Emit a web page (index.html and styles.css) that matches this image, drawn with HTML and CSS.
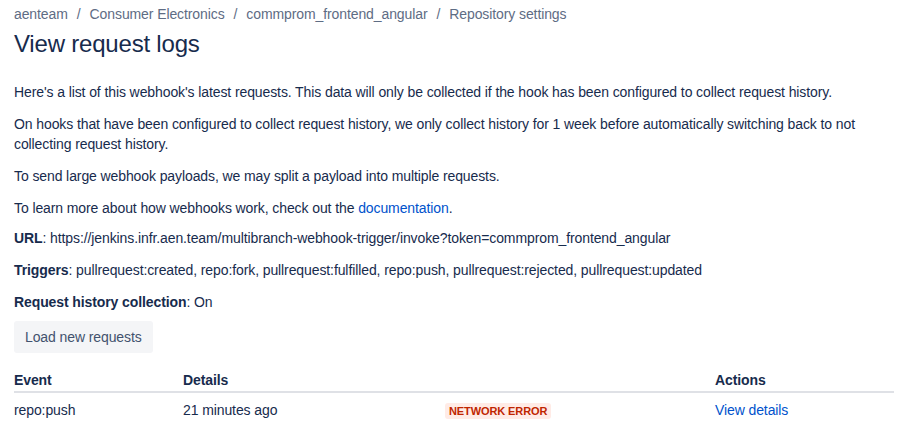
FILE: index.html
```html
<!DOCTYPE html>
<html lang="en">
<head>
<meta charset="utf-8">
<title>View request logs</title>
<link rel="stylesheet" href="styles.css">
</head>
<body>
<div class="page">
  <nav class="breadcrumbs">
    <a href="#">aenteam</a><span class="sep">/</span><a href="#">Consumer Electronics</a><span class="sep">/</span><a href="#">commprom_frontend_angular</a><span class="sep">/</span><a href="#">Repository settings</a>
  </nav>
  <h1 class="title">View request logs</h1>
  <div class="content">
    <p>Here's a list of this webhook's latest requests. This data will only be collected if the hook has been configured to collect request history.</p>
    <p>On hooks that have been configured to collect request history, we only collect history for 1 week before automatically switching back to not collecting request history.</p>
    <p>To send large webhook payloads, we may split a payload into multiple requests.</p>
    <p class="intro-last">To learn more about how webhooks work, check out the <a class="link" href="#">documentation</a>.</p>
    <p><strong>URL</strong>: https://jenkins.infr.aen.team/multibranch-webhook-trigger/invoke?token=commprom_frontend_angular</p>
    <p><strong>Triggers</strong>: pullrequest:created, repo:fork, pullrequest:fulfilled, repo:push, pullrequest:rejected, pullrequest:updated</p>
    <p class="last"><strong>Request history collection</strong>: On</p>
    <button class="btn" type="button">Load new requests</button>
    <table class="logs">
      <colgroup>
        <col class="c-event">
        <col class="c-details">
        <col class="c-status">
        <col class="c-actions">
      </colgroup>
      <thead>
        <tr><th>Event</th><th>Details</th><th></th><th>Actions</th></tr>
      </thead>
      <tbody>
        <tr>
          <td>repo:push</td>
          <td>21 minutes ago</td>
          <td><span class="badge">Network error</span></td>
          <td><a class="link" href="#">View details</a></td>
        </tr>
      </tbody>
    </table>
  </div>
</div>
</body>
</html>
```

FILE: styles.css
```css
html, body {
  margin: 0;
  padding: 0;
  background: #ffffff;
}
body {
  font-family: "Liberation Sans", Arial, sans-serif;
  font-size: 14px;
  line-height: 20px;
  letter-spacing: -0.1px;
  color: #172B4D;
}
.page {
  padding: 4px 10px 0 14px;
}
.breadcrumbs {
  height: 20px;
  color: #5E6C84;
}
.breadcrumbs a {
  color: #5E6C84;
  text-decoration: none;
}
.breadcrumbs .sep {
  padding: 0 9px;
}
.title {
  margin: 6px 0 0;
  font-size: 24px;
  line-height: 28px;
  font-weight: 400;
  letter-spacing: -0.2px;
  color: #172B4D;
}
.content {
  margin-top: 24px;
}
.content p {
  margin: 0 0 12px;
}
.content p.intro-last {
  margin-bottom: 10px;
}
.content p.last {
  margin-bottom: 9px;
}
strong {
  font-weight: 700;
}
.link {
  color: #0052CC;
  text-decoration: none;
}
.btn {
  display: block;
  height: 32px;
  padding: 0 11px;
  border: 0;
  border-radius: 3px;
  background: #F4F5F7;
  color: #42526E;
  font: inherit;
  letter-spacing: inherit;
  line-height: 32px;
}
.logs {
  margin-top: 13px;
  width: 880px;
  table-layout: fixed;
  border-collapse: collapse;
}
.c-event { width: 169px; }
.c-details { width: 262px; }
.c-status { width: 270px; }
.c-actions { width: 179px; }
.logs th {
  text-align: left;
  font-weight: 700;
  padding: 4px 0 1px;
  border-bottom: 2px solid #DFE1E6;
}
.logs td {
  padding: 7px 0 5px;
  text-align: left;
}
.badge {
  display: inline-block;
  padding: 0 4px;
  height: 16px;
  line-height: 16px;
  border-radius: 3px;
  background: #FFEBE6;
  color: #BF2600;
  font-size: 11px;
  font-weight: 700;
  text-transform: uppercase;
  vertical-align: 0;
}
```
